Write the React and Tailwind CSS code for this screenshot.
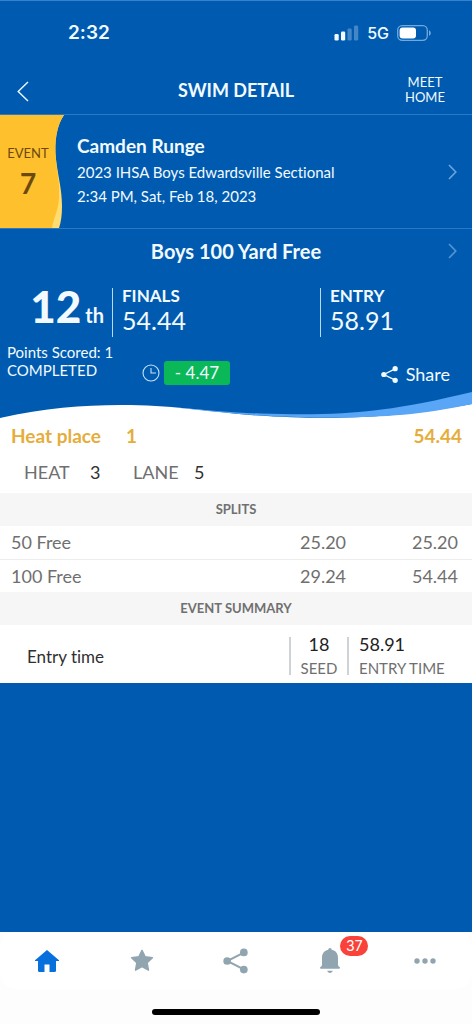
import React from "react";

const splits = [
  { name: "50 Free", split: "25.20", total: "25.20" },
  { name: "100 Free", split: "29.24", total: "54.44" },
];

function Chevron({ className }) {
  return (
    <svg viewBox="0 0 9 16" className={className} fill="none" stroke="currentColor" strokeWidth="1.6" aria-hidden="true">
      <path d="M1 1l6.8 7L1 15" />
    </svg>
  );
}

function ShareIcon({ className }) {
  return (
    <svg viewBox="0 0 24 24" className={className} fill="currentColor" aria-hidden="true">
      <path d="M20 4L4 12l16 8" fill="none" stroke="currentColor" strokeWidth="1.9" />
      <circle cx="20" cy="3.8" r="3.7" />
      <circle cx="4" cy="12" r="3.7" />
      <circle cx="20" cy="20.2" r="3.7" />
    </svg>
  );
}

function StatusBar() {
  return (
    <div className="flex h-16 items-center justify-between border-t border-[#3583cf] pr-10 pl-17">
      <span className="pt-0.5 font-['Inter',sans-serif] text-[19px] font-semibold">2:32</span>
      <div className="flex items-center gap-2">
        <svg viewBox="0 0 25 16" className="h-4 w-[25px]" fill="currentColor" aria-hidden="true">
          <rect x="0.5" y="9" width="4.2" height="6.5" rx="1.3" />
          <rect x="7" y="6.5" width="4.2" height="9" rx="1.3" />
          <rect x="13.5" y="3.5" width="4.2" height="12" rx="1.3" opacity="0.28" />
          <rect x="20" y="0.5" width="4.2" height="15" rx="1.3" opacity="0.28" />
        </svg>
        <span className="font-['Inter',sans-serif] text-base font-medium">5G</span>
        <svg viewBox="0 0 35 16" className="h-4 w-[35px]" aria-hidden="true">
          <rect x="0.7" y="0.7" width="29.6" height="14.6" rx="4.5" fill="none" stroke="#6fa9dd" strokeWidth="1.3" />
          <rect x="2.6" y="2.6" width="16.4" height="10.8" rx="3" fill="#fff" />
          <path d="M32 5.2c2.4 1 2.4 4.6 0 5.6z" fill="#6fa9dd" />
        </svg>
      </div>
    </div>
  );
}

function Header() {
  return (
    <header className="grid h-[51px] grid-cols-[94px_1fr_94px] items-center border-b border-[#2b78c4]">
      <button type="button" aria-label="Back" className="flex h-full w-12 items-center pt-1 pl-[17px]">
        <svg viewBox="0 0 12 21" className="h-[21px] w-3" fill="none" stroke="currentColor" strokeWidth="1.4" aria-hidden="true">
          <path d="M11 1L1.2 10.5 11 20" />
        </svg>
      </button>
      <h1 className="pt-0.5 text-center text-lg font-bold">SWIM DETAIL</h1>
      <button type="button" className="pt-0.5 text-center text-[13px] leading-[15px]">
        MEET
        <br />
        HOME
      </button>
    </header>
  );
}

function EventCard() {
  return (
    <a href="#meet" className="flex h-[114px] items-stretch border-b border-[#2b78c4]">
      <div className="relative w-16 text-[#6a4a10]">
        <svg viewBox="0 0 64 114" preserveAspectRatio="none" className="absolute inset-0 h-full w-full" aria-hidden="true">
          <path d="M0 0H64C57 10 54 26 56 45C58 62 62 75 62 92C62 101 61 108 59 114H0z" fill="#ffdc70" />
          <path d="M0 0H64C57 10 54 26 56 45C57 59 60 67 59 84C58 98 53 105 52 114H0z" fill="#ffc02e" />
        </svg>
        <div className="relative flex flex-col items-center pt-[30px] pr-2">
          <span className="text-[13px] leading-4">EVENT</span>
          <span className="mt-1 text-[28px] leading-9 font-bold">7</span>
        </div>
      </div>
      <div className="flex-1 pt-[19px] pl-[13px]">
        <div className="text-[19px] leading-6 font-bold">Camden Runge</div>
        <div className="mt-0.5 text-[15px] leading-6">2023 IHSA Boys Edwardsville Sectional</div>
        <div className="text-[15px] leading-6">2:34 PM, Sat, Feb 18, 2023</div>
      </div>
      <Chevron className="mr-[15px] h-4 w-[9px] self-center text-[#6aa5de]" />
    </a>
  );
}

function Result({ label, value }) {
  return (
    <div className="h-[49px] border-l border-[#b9daf5] pl-[9px]">
      <div className="text-[17px] leading-4 font-bold">{label}</div>
      <div className="mt-0.5 text-[25px] leading-7">{value}</div>
    </div>
  );
}

function Summary() {
  return (
    <section>
      <a href="#event" className="grid h-[43px] grid-cols-[24px_1fr_24px] items-center">
        <span className="col-start-2 text-center text-xl font-bold">Boys 100 Yard Free</span>
        <Chevron className="h-4 w-[9px] text-[#5496d4]" />
      </a>
      <div className="mt-4 grid grid-cols-[112px_208px_1fr]">
        <div className="flex h-[49px] items-baseline justify-end gap-1 pr-2 leading-9">
          <span className="text-[44px] font-black">12</span>
          <span className="text-xl font-bold">th</span>
        </div>
        <Result label="FINALS" value="54.44" />
        <Result label="ENTRY" value="58.91" />
      </div>
      <div className="mt-1.5 flex h-12 pr-[22px] pl-[7px]">
        <div className="w-[135px] text-[15px] leading-[18px]">
          <div>Points Scored: 1</div>
          <div>COMPLETED</div>
        </div>
        <div className="flex items-center gap-1 pt-3">
          <svg viewBox="0 0 18 18" className="h-[18px] w-[18px]" fill="none" stroke="#c5e2fa" strokeWidth="1.1" aria-hidden="true">
            <circle cx="9" cy="9" r="8" />
            <path d="M9 4v5h5" />
          </svg>
          <span className="flex h-6 w-[66px] items-center justify-center rounded-[3px] bg-[#0ab858] text-[17px]">- 4.47</span>
        </div>
        <button type="button" className="ml-auto flex items-center gap-2 pt-3.5 text-lg">
          <ShareIcon className="h-[17px] w-[17px]" />
          Share
        </button>
      </div>
      <svg viewBox="0 0 472 30" preserveAspectRatio="none" className="block h-[30px] w-full" aria-hidden="true">
        <path d="M0 30V27C45 17 82 14 121 14C170 14 205 20 250 24C350 31 410 24 472 13V30z" fill="#fff" />
        <path d="M170 16C205 19 236 22 260 22.5C340 25 385 22 472 1V13C420 24 385 26 340 26.5C270 27 235 23 170 16z" fill="#59a5f6" />
      </svg>
    </section>
  );
}

function Band({ children }) {
  return (
    <h2 className="flex h-[33px] items-center justify-center bg-[#f6f6f6] text-[13px] font-bold text-[#707070]">{children}</h2>
  );
}

function Details() {
  return (
    <section className="bg-white text-[#6f6f6f]">
      <div className="flex h-[30px] items-center pr-2.5 pl-[11px] text-[19px] font-bold text-[#e5ad3b]">
        <span className="w-[115px]">Heat place</span>
        <span>1</span>
        <span className="ml-auto">54.44</span>
      </div>
      <dl className="flex h-[42px] items-center pl-6 text-lg">
        <dt className="w-[66px]">HEAT</dt>
        <dd className="w-[43px] text-[#303030]">3</dd>
        <dt className="w-[61px]">LANE</dt>
        <dd className="text-[#303030]">5</dd>
      </dl>
      <Band>SPLITS</Band>
      <table className="w-full table-fixed border-collapse text-lg leading-6">
        <tbody>
          {splits.map((row) => (
            <tr key={row.name} className="h-[33px] border-b border-[#ececec] last:border-b-0">
              <td className="pl-[11px]">{row.name}</td>
              <td className="w-[110px]">{row.split}</td>
              <td className="w-[62px] pr-3.5 text-right">{row.total}</td>
            </tr>
          ))}
        </tbody>
      </table>
      <Band>EVENT SUMMARY</Band>
      <div className="flex h-[58px] items-center pt-1 pr-[27px] pl-[27px]">
        <span className="flex-1 pt-0.5 text-[17px] text-[#303030]">Entry time</span>
        <div className="flex h-[38px] w-[58px] flex-col items-center justify-center border-l-2 border-[#d0d3d6]">
          <span className="text-lg leading-6 text-[#222]">18</span>
          <span className="text-[15px] leading-6">SEED</span>
        </div>
        <div className="flex h-[38px] w-[98px] flex-col justify-center border-l-2 border-[#d0d3d6] pl-2.5">
          <span className="text-lg leading-6 text-[#222]">58.91</span>
          <span className="text-[15px] leading-6 whitespace-nowrap">ENTRY TIME</span>
        </div>
      </div>
    </section>
  );
}

function TabBar() {
  return (
    <nav className="mt-auto h-[92px] bg-[#fdfdfd]">
      <div className="grid h-[57px] grid-cols-5 items-center rounded-2xl bg-white text-[#91a5b0]">
        <a href="#home" aria-label="Home" className="flex justify-center text-[#0870dc]">
          <svg viewBox="0 0 24 22" className="h-[22px] w-6" fill="currentColor" aria-hidden="true">
            <path d="M12 0L24 10.3c.3.4.1.8-.4.8H21v9.7c0 .7-.4 1.1-1.1 1.1H14.5v-7.3H9.5v7.3H4.1c-.7 0-1.1-.4-1.1-1.1v-9.7H.4c-.5 0-.7-.4-.4-.8z" />
          </svg>
        </a>
        <a href="#favorites" aria-label="Favorites" className="flex justify-center">
          <svg viewBox="0 0 24 23" className="h-[23px] w-6" fill="currentColor" stroke="currentColor" strokeWidth="1.4" strokeLinejoin="round" aria-hidden="true">
            <path d="M12 1.3l3.2 6.5 7.2 1-5.2 5 1.3 7.4-6.5-3.5-6.5 3.5 1.3-7.4-5.2-5 7.2-1z" />
          </svg>
        </a>
        <a href="#share" aria-label="Share" className="flex justify-center">
          <ShareIcon className="h-[26px] w-[25px]" />
        </a>
        <a href="#notifications" aria-label="Notifications, 37 new" className="flex justify-center">
          <span className="relative">
            <svg viewBox="0 0 20 25" className="h-[25px] w-5" fill="currentColor" aria-hidden="true">
              <path d="M10 0c1.1 0 1.6.7 1.7 1.8C15.8 2.7 18 5.7 18 9.7V16.500c0 1.400.5 1.700 1.600 2.600.7.700.4 1.700-.6 1.700H1c-1 0-1.300-1-.6-1.700C1.500 18.200 2 17.900 2 16.500V9.700c0-4 2.200-7 6.300-7.900C8.400.7 8.900 0 10 0z" />
              <path d="M7.300 22.700h5.400c-.3 1.400-1.300 2.200-2.700 2.200s-2.400-.8-2.700-2.200z" />
            </svg>
            <span className="absolute -top-3 left-5 flex h-5 w-7 items-center justify-center rounded-full bg-[#f9423a] font-['Inter',sans-serif] text-sm text-white">37</span>
          </span>
        </a>
        <button type="button" aria-label="More" className="flex justify-center">
          <svg viewBox="0 0 22 6" className="h-1.5 w-[22px]" fill="currentColor" aria-hidden="true">
            <circle cx="3" cy="3" r="2.7" />
            <circle cx="11" cy="3" r="2.7" />
            <circle cx="19" cy="3" r="2.7" />
          </svg>
        </button>
      </div>
      <div className="mx-auto mt-5 h-1.5 w-[168px] rounded-full bg-black" />
    </nav>
  );
}

export default function App() {
  return (
    <div className="flex min-h-screen flex-col bg-[#005bb0] font-['Lato',sans-serif] text-[#f2faff] [font-variant-ligatures:none]">
      <StatusBar />
      <Header />
      <main>
        <EventCard />
        <Summary />
        <Details />
      </main>
      <TabBar />
    </div>
  );
}
